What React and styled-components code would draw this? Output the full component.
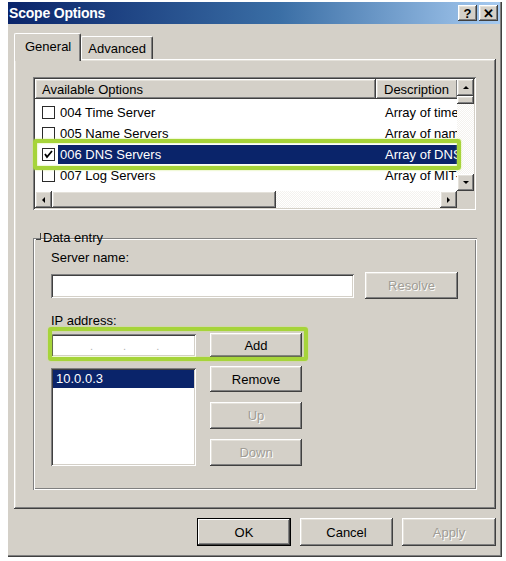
import React from "react";
import styled, { createGlobalStyle, css } from "styled-components";

const Global = createGlobalStyle`
  html, body { margin: 0; padding: 0; background: #ffffff; }
  body { font-family: "Liberation Sans", Arial, sans-serif; font-size: 13px; color: #000; }
  * { box-sizing: border-box; }
`;

const raised = css`
  box-shadow: inset -1px -1px #404040, inset 1px 1px #ffffff, inset -2px -2px #808080, inset 2px 2px #e4e1da;
`;
const sunken = css`
  box-shadow: inset 1px 1px #808080, inset -1px -1px #ffffff, inset 2px 2px #404040, inset -2px -2px #d4d0c8;
`;

const Window = styled.div`
  margin: 2px 0 0 8px;
  width: 494px;
  height: 555px;
  background: #d4d0c8;
  display: flex;
  flex-direction: column;
  box-shadow: inset -1px -1px #404040, inset -2px -2px #808080;
`;

const TitleBar = styled.div`
  height: 22px;
  margin-right: 2px;
  background: linear-gradient(to right, #0a246a 0%, #3a6ea5 55%, #a6caf0 100%);
  display: flex;
  align-items: center;
  justify-content: space-between;
  padding: 0 2px 0 1px;
`;

const Title = styled.span`
  color: #fff;
  font-weight: bold;
  font-size: 14px;
  letter-spacing: -0.2px;
`;

const TitleButtons = styled.div`
  display: flex;
  gap: 2px;
`;

const TitleButton = styled.div`
  width: 19px;
  height: 16px;
  background: #d4d0c8;
  ${raised};
  display: flex;
  align-items: center;
  justify-content: center;
  font-weight: bold;
  font-size: 13px;
  line-height: 1;
  color: #000;
`;

const Body = styled.div`
  flex: 1;
  display: flex;
  flex-direction: column;
  padding: 9px 6px 0 6px;
`;

const TabStrip = styled.div`
  display: flex;
  align-items: flex-end;
  height: 26px;
  position: relative;
  z-index: 1;
`;

const Tab = styled.div`
  height: ${(p) => (p.$active ? "28px" : "23px")};
  margin-bottom: ${(p) => (p.$active ? "-2px" : "0")};
  padding: ${(p) => (p.$active ? "4px 9px 0 10px" : "3px 6px 0 6px")};
  background: #d4d0c8;
  border-top: 1px solid #ffffff;
  border-left: 1px solid #ffffff;
  border-right: 1px solid #404040;
  box-shadow: inset -1px 0 #808080;
  border-radius: 2px 2px 0 0;
  color: #000;
  line-height: 18px;
`;

const Panel = styled.div`
  height: 450px;
  width: 482px;
  background: #d4d0c8;
  ${raised};
  padding: 18px 19px 0 19px;
  display: flex;
  flex-direction: column;
`;

const ListView = styled.div`
  position: relative;
  width: 443px;
  height: 133px;
  padding: 2px;
  background: #fff;
  ${sunken};
  display: grid;
  grid-template-columns: 1fr 17px;
  grid-template-rows: 1fr 17px;
`;

const ListMain = styled.div`
  overflow: hidden;
  display: flex;
  flex-direction: column;
`;

const HeaderRow = styled.div`
  display: flex;
  height: 20px;
  flex-shrink: 0;
`;

const HeaderCell = styled.div`
  width: ${(p) => p.$w}px;
  flex-shrink: 0;
  background: #d4d0c8;
  ${raised};
  padding: 2px 0 0 ${(p) => p.$pl || 7}px;
  line-height: 17px;
  white-space: nowrap;
  overflow: hidden;
`;

const Rows = styled.div`
  padding-top: 3px;
`;

const Row = styled.div`
  display: flex;
  align-items: center;
  height: 21px;
`;

const CheckBox = styled.div`
  width: 13px;
  height: 13px;
  margin: 0 3px 0 7px;
  border: 1px solid #2a2a2a;
  background: #fff;
  flex-shrink: 0;
  display: flex;
  align-items: center;
  justify-content: center;
`;

const RowBand = styled.div`
  flex: 1;
  display: flex;
  align-items: center;
  height: 19px;
  background: ${(p) => (p.$sel ? "#0a246a" : "transparent")};
  color: ${(p) => (p.$sel ? "#fff" : "#000")};
`;

const NameCell = styled.div`
  width: 319px;
  padding-left: 2px;
  white-space: nowrap;
  flex-shrink: 0;
`;

const DescCell = styled.div`
  width: 80px;
  padding-left: 8px;
  white-space: nowrap;
  overflow: hidden;
  flex-shrink: 0;
`;

const checker = css`
  background: repeating-conic-gradient(#f4f2ee 0% 25%, #ffffff 0% 50%) 0 0 / 2px 2px;
`;

const VScroll = styled.div`
  display: flex;
  flex-direction: column;
  ${checker};
`;

const HScroll = styled.div`
  display: flex;
  ${checker};
`;

const Corner = styled.div`
  background: #d4d0c8;
`;

const ScrollBtn = styled.div`
  width: ${(p) => p.$w || 17}px;
  height: ${(p) => p.$h || 17}px;
  flex-shrink: 0;
  background: #d4d0c8;
  ${raised};
  display: flex;
  align-items: center;
  justify-content: center;
`;

const Spacer = styled.div`
  flex: 1;
`;

const Arrow = ({ dir }) => {
  const pts = {
    up: "1,5 4,2 7,5",
    down: "1,2 4,5 7,2",
    left: "5,1 2,4 5,7",
    right: "2,1 5,4 2,7",
  }[dir];
  return (
    <svg width="8" height="8" viewBox="0 0 8 8">
      <polygon points={pts} fill="#000" />
    </svg>
  );
};

const Highlight = styled.div`
  position: absolute;
  border: 4px solid #a6d43a;
  border-radius: 3px;
  box-shadow: 0 0 2px #c8e870, inset 0 0 2px #c8e870;
  pointer-events: none;
  left: ${(p) => p.$l}px;
  top: ${(p) => p.$t}px;
  width: ${(p) => p.$w}px;
  height: ${(p) => p.$h}px;
`;

const GroupBox = styled.fieldset`
  margin: 20px 0 0 0;
  width: 444px;
  height: 260px;
  padding: 5px 18px 0 18px;
  border: none;
  box-shadow: inset 1px 1px #808080, inset -1px -1px #ffffff, inset 2px 2px #ffffff, inset -2px -2px #808080;
  position: relative;
`;

const Legend = styled.legend`
  padding: 0 1px 0 8px;
  margin-left: -16px;
  position: relative;
  line-height: 15px;
  &::before {
    content: "";
    position: absolute;
    left: 1px;
    top: 3px;
    width: 4px;
    height: 6px;
    border-right: 1px solid #404040;
    border-bottom: 1px solid #404040;
  }
`;

const Label = styled.div`
  height: 16px;
  line-height: 16px;
  margin-top: ${(p) => p.$mt || 0}px;
  margin-bottom: ${(p) => p.$mb || 0}px;
`;

const FieldRow = styled.div`
  display: flex;
  align-items: ${(p) => p.$align || "center"};
  gap: ${(p) => p.$gap || 11}px;
  margin-top: ${(p) => p.$mt || 0}px;
  position: relative;
`;

const TextInput = styled.div`
  width: ${(p) => p.$w}px;
  height: ${(p) => p.$h}px;
  background: #fff;
  ${sunken};
  position: relative;
`;

const Dots = styled.div`
  display: flex;
  gap: 30px;
  padding: 6px 0 0 39px;
  color: #b4b4b4;
  font-size: 11px;
`;

const ListBox = styled.div`
  width: 145px;
  height: 98px;
  margin-top: 2px;
  background: #fff;
  ${sunken};
  padding: 2px;
`;

const ListItem = styled.div`
  height: 18px;
  line-height: 18px;
  padding-left: 3px;
  background: #0a246a;
  color: #fff;
`;

const ButtonColumn = styled.div`
  display: flex;
  flex-direction: column;
  gap: 10px;
`;

const Button = styled.div`
  width: ${(p) => p.$w || 93}px;
  height: ${(p) => p.$h || 27}px;
  background: #d4d0c8;
  ${raised};
  ${(p) =>
    p.$default &&
    css`
      border: 1px solid #000;
      box-shadow: inset -1px -1px #404040, inset 1px 1px #ffffff, inset -2px -2px #808080;
    `}
  display: flex;
  align-items: center;
  justify-content: center;
  color: ${(p) => (p.$disabled ? "#a09d96" : "#000")};
  text-shadow: ${(p) => (p.$disabled ? "1px 1px #ffffff" : "none")};
  flex-shrink: 0;
`;

const BottomBar = styled.div`
  display: flex;
  justify-content: flex-end;
  gap: 9px;
  padding: 9px 0 0 0;
`;

const rows = [
  { name: "004 Time Server", desc: "Array of time servers" },
  { name: "005 Name Servers", desc: "Arrav of name servers" },
  { name: "006 DNS Servers", desc: "Array of DNS servers", checked: true, sel: true },
  { name: "007 Log Servers", desc: "Array of MIT-LCS UDP log servers" },
];

export default function App() {
  return (
    <>
      <Global />
      <Window>
        <TitleBar>
          <Title>Scope Options</Title>
          <TitleButtons>
            <TitleButton>?</TitleButton>
            <TitleButton>✕</TitleButton>
          </TitleButtons>
        </TitleBar>
        <Body>
          <TabStrip>
            <Tab $active>General</Tab>
            <Tab>Advanced</Tab>
          </TabStrip>
          <Panel>
            <ListView>
              <ListMain>
                <HeaderRow>
                  <HeaderCell $w={341}>Available Options</HeaderCell>
                  <HeaderCell $w={82} $pl={8}>Description</HeaderCell>
                </HeaderRow>
                <Rows>
                  {rows.map((r) => (
                    <Row key={r.name}>
                      <CheckBox>
                        {r.checked && (
                          <svg width="9" height="9" viewBox="0 0 9 9">
                            <polyline points="1,4 3,7 8,1" fill="none" stroke="#000" strokeWidth="1.8" />
                          </svg>
                        )}
                      </CheckBox>
                      <RowBand $sel={r.sel}>
                        <NameCell>{r.name}</NameCell>
                        <DescCell>{r.desc}</DescCell>
                      </RowBand>
                    </Row>
                  ))}
                </Rows>
              </ListMain>
              <VScroll>
                <ScrollBtn $h={17}>
                  <Arrow dir="up" />
                </ScrollBtn>
                <ScrollBtn $h={8} />
                <Spacer />
                <ScrollBtn $h={17}>
                  <Arrow dir="down" />
                </ScrollBtn>
              </VScroll>
              <HScroll>
                <ScrollBtn>
                  <Arrow dir="left" />
                </ScrollBtn>
                <ScrollBtn $w={224} />
                <Spacer />
                <ScrollBtn>
                  <Arrow dir="right" />
                </ScrollBtn>
              </HScroll>
              <Corner />
              <Highlight $l={0} $t={62} $w={428} $h={31} />
            </ListView>

            <GroupBox>
              <Legend>Data entry</Legend>
              <Label $mb={6}>Server name:</Label>
              <FieldRow $gap={11}>
                <TextInput $w={303} $h={24} />
                <Button $disabled $h={27}>Resolve</Button>
              </FieldRow>
              <Label $mt={14} $mb={4}>IP address:</Label>
              <FieldRow $gap={14}>
                <TextInput $w={145} $h={23}>
                  <Dots>
                    <span>.</span>
                    <span>.</span>
                    <span>.</span>
                  </Dots>
                </TextInput>
                <Button $w={92} $h={24}>Add</Button>
                <Highlight $l={-3} $t={-6} $w={260} $h={34} />
              </FieldRow>
              <FieldRow $gap={14} $align="flex-start" $mt={9}>
                <ListBox>
                  <ListItem>10.0.0.3</ListItem>
                </ListBox>
                <ButtonColumn>
                  <Button $w={92} $h={26}>Remove</Button>
                  <Button $w={92} $h={27} $disabled>Up</Button>
                  <Button $w={92} $h={27} $disabled>Down</Button>
                </ButtonColumn>
              </FieldRow>
            </GroupBox>
          </Panel>
          <BottomBar>
            <Button $default $w={94} $h={28}>OK</Button>
            <Button $w={93} $h={28}>Cancel</Button>
            <Button $w={94} $h={28} $disabled>Apply</Button>
          </BottomBar>
        </Body>
      </Window>
    </>
  );
}
